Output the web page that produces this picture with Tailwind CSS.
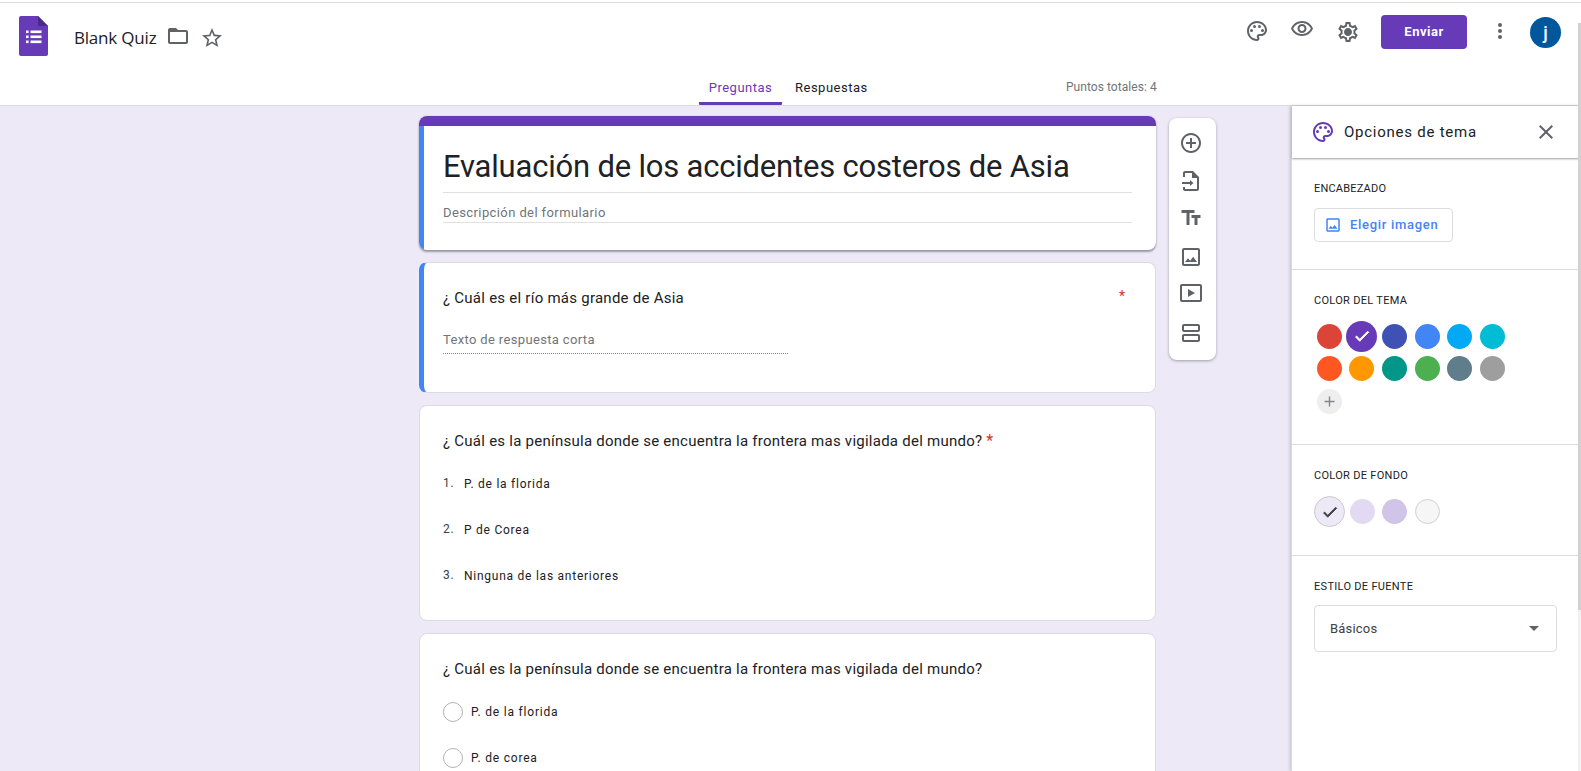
<!DOCTYPE html>
<html lang="en">
<head>
  <meta charset="UTF-8">
  <title>Blank Quiz</title>
  <script src="https://cdn.jsdelivr.net/npm/@tailwindcss/browser@4"></script>
</head>
<body class="relative h-[771px] overflow-hidden bg-white font-['Roboto',sans-serif] text-[#202124]">

  <!-- Top bar -->
  <header class="h-[104px] border-t border-b border-[#dadce0] mt-[2px] box-border bg-white flex flex-col">
    <div class="h-[63px] flex items-start relative">
      <svg class="ml-[19px] mt-[13px]" width="29" height="40" viewBox="0 0 29 40">
        <path d="M2 0h17l10 10v28a2 2 0 0 1-2 2H2a2 2 0 0 1-2-2V2a2 2 0 0 1 2-2z" fill="#673ab7"/>
        <path d="M19 0l10 10h-10z" fill="#4a2a8f"/>
        <g fill="#fff"><rect x="7" y="14.5" width="2.6" height="2.6"/><rect x="7" y="19.5" width="2.6" height="2.6"/><rect x="7" y="24.5" width="2.6" height="2.6"/><rect x="11.5" y="14.5" width="11" height="2.6"/><rect x="11.5" y="19.5" width="11" height="2.6"/><rect x="11.5" y="24.5" width="11" height="2.6"/></g>
      </svg>
      <span class="ml-[26px] mt-[23px] text-[17px] leading-[24px] font-['Open_Sans',sans-serif] tracking-[-0.2px]">Blank Quiz</span>
      <svg class="ml-[10px] mt-[21px]" width="24" height="24" viewBox="0 0 24 24" fill="#5f6368"><path d="M20 6h-8l-2-2H4c-1.1 0-1.99.9-1.99 2L2 18c0 1.1.9 2 2 2h16c1.1 0 2-.9 2-2V8c0-1.1-.9-2-2-2zm0 12H4V8h16v10z"/></svg>
      <svg class="ml-[10px] mt-[23px]" width="24" height="24" viewBox="0 0 24 24" fill="#5f6368"><path d="M22 9.24l-7.19-.62L12 2 9.19 8.63 2 9.24l5.46 4.73L5.82 21 12 17.27 18.18 21l-1.63-7.03L22 9.24zM12 15.4l-3.76 2.27 1-4.28-3.32-2.88 4.38-.38L12 6.1l1.71 4.04 4.38.38-3.32 2.88 1 4.28L12 15.4z"/></svg>
      <div class="ml-auto flex items-start">
        <svg class="mt-[16px]" width="24" height="24" viewBox="0 0 24 24" fill="#5f6368"><path d="M12 2C6.49 2 2 6.49 2 12s4.49 10 10 10c1.38 0 2.5-1.12 2.5-2.5 0-.61-.23-1.2-.64-1.67-.08-.1-.13-.21-.13-.33 0-.28.22-.5.5-.5H16c3.31 0 6-2.69 6-6 0-4.96-4.49-9-10-9zm4 13h-1.77c-1.38 0-2.5 1.12-2.5 2.5 0 .61.22 1.19.63 1.65.06.07.14.19.14.35 0 .28-.22.5-.5.5-4.41 0-8-3.59-8-8s3.59-8 8-8 8 3.14 8 7c0 2.21-1.79 4-4 4z"/><circle cx="6.5" cy="11.5" r="1.5"/><circle cx="9.5" cy="7.5" r="1.5"/><circle cx="14.5" cy="7.5" r="1.5"/><circle cx="17.5" cy="11.5" r="1.5"/></svg>
        <svg class="ml-[21px] mt-[14px]" width="24" height="24" viewBox="0 0 24 24" fill="#5f6368"><path d="M12 6c3.79 0 7.17 2.13 8.82 5.5C19.17 14.87 15.79 17 12 17s-7.17-2.13-8.82-5.5C4.83 8.13 8.21 6 12 6m0-2C7 4 2.73 7.11 1 11.5 2.73 15.89 7 19 12 19s9.27-3.11 11-7.5C21.27 7.11 17 4 12 4zm0 5c1.38 0 2.5 1.12 2.5 2.5S13.38 14 12 14s-2.5-1.12-2.5-2.5S10.62 9 12 9m0-2c-2.48 0-4.5 2.02-4.5 4.5S9.52 16 12 16s4.5-2.02 4.5-4.5S14.48 7 12 7z"/></svg>
        <svg class="ml-[22px] mt-[17px]" width="24" height="24" viewBox="0 0 24 24" fill="#5f6368"><path d="M19.43 12.98c.04-.32.07-.64.07-.98s-.03-.66-.07-.98l2.11-1.65c.19-.15.24-.42.12-.64l-2-3.46c-.12-.22-.39-.3-.61-.22l-2.49 1c-.52-.4-1.08-.73-1.69-.98l-.38-2.65C14.46 2.18 14.25 2 14 2h-4c-.25 0-.46.18-.49.42l-.38 2.65c-.61.25-1.17.59-1.69.98l-2.49-1c-.23-.09-.49 0-.61.22l-2 3.46c-.13.22-.07.49.12.64l2.11 1.65c-.04.32-.07.65-.07.98s.03.66.07.98l-2.11 1.65c-.19.15-.24.42-.12.64l2 3.46c.12.22.39.3.61.22l2.49-1c.52.4 1.08.73 1.69.98l.38 2.65c.03.24.24.42.49.42h4c.25 0 .46-.18.49-.42l.38-2.65c.61-.25 1.17-.59 1.69-.98l2.49 1c.23.09.49 0 .61-.22l2-3.46c.12-.22.07-.49-.12-.64l-2.11-1.65zM17.45 11.27c.04.31.05.52.05.73 0 .21-.02.43-.05.73l-.14 1.13.89.7 1.08.84-.7 1.21-1.27-.51-1.04-.42-.9.68c-.43.32-.84.56-1.25.73l-1.06.43-.16 1.13-.2 1.35h-1.4l-.19-1.35-.16-1.13-1.06-.43c-.43-.18-.83-.41-1.23-.71l-.91-.7-1.06.43-1.27.51-.7-1.21 1.08-.84.89-.7-.14-1.13c-.03-.31-.05-.54-.05-.74s.02-.43.05-.73l.14-1.13-.89-.7-1.08-.84.7-1.21 1.27.51 1.04.42.9-.68c.43-.32.84-.56 1.25-.73l1.06-.43.16-1.13.2-1.35h1.39l.19 1.35.16 1.13 1.06.43c.43.18.83.41 1.23.71l.91.7 1.06-.43 1.27-.51.7 1.21-1.07.85-.89.7.14 1.13zM12 8c-2.21 0-4 1.79-4 4s1.79 4 4 4 4-1.79 4-4-1.79-4-4-4z"/></svg>
        <button class="ml-[21px] mt-[12px] w-[86px] h-[34px] rounded-[4px] bg-[#673ab7] text-white text-[13px] font-bold tracking-[0.5px]">Enviar</button>
        <svg class="ml-[21px] mt-[16px]" width="24" height="24" viewBox="0 0 24 24" fill="#5f6368"><circle cx="12" cy="6" r="2"/><circle cx="12" cy="12" r="2"/><circle cx="12" cy="18" r="2"/></svg>
        <div class="ml-[18px] mr-[20px] mt-[14px] w-[31px] h-[31px] rounded-full bg-[#01579b] text-white text-[18px] font-medium flex items-center justify-center">j</div>
      </div>
    </div>
    <nav class="relative flex-1 flex pl-[699px]">
      <a class="w-[83px] text-center text-[13px] tracking-[0.5px] text-[#673ab7] pt-[12px] border-b-[3px] border-[#673ab7] rounded-b-[1px]">Preguntas</a>
      <a class="ml-[13px] w-[86px] pt-[12px] text-[13px] tracking-[0.5px] text-[#202124]">Respuestas</a>
      <span class="ml-[185px] pt-[12px] text-[12px] tracking-[0.05px] text-[#70757a]">Puntos totales: 4</span>
    </nav>
  </header>

  <div class="flex h-[665px]">
    <!-- Form column -->
    <main class="flex-1 bg-[#ede9f7] overflow-hidden pl-[419px] pt-[10px] flex items-start gap-[13px]">
      <div class="w-[737px] shrink-0 flex flex-col gap-[12px]">
        <section class="h-[134px] rounded-[8px] bg-white overflow-hidden shadow-[0_2px_2px_rgba(60,64,67,0.45),0_0_2px_rgba(60,64,67,0.2)]">
          <div class="h-[10px] bg-[#673ab7]"></div>
          <div class="h-[124px] border-l-[5px] border-[#4285f4] pl-[19px] pr-[24px]">
            <h1 class="pt-[20px] h-[67px] border-b border-[#e0e0e0] text-[31px] leading-[42px] font-normal tracking-[-0.2px]">Evaluación de los accidentes costeros de Asia</h1>
            <p class="pt-[11px] h-[30px] border-b border-[#e0e0e0] text-[13px] leading-[18px] tracking-[0.4px] text-[#70757a]">Descripción del formulario</p>
          </div>
        </section>

        <section class="h-[131px] rounded-[8px] bg-white border border-[#dadce0] border-l-[5px] border-l-[#4285f4] pl-[19px] pr-[23px] relative">
          <p class="pt-[25px] text-[15px] leading-[20px] tracking-[0.25px]">¿ Cuál es el río más grande de Asia</p>
          <div class="mt-[22px] w-[345px] h-[24px] border-b border-dotted border-[#80868b] text-[13px] tracking-[0.35px] text-[#70757a]">Texto de respuesta corta</div>
          <span class="absolute right-[30px] top-[23px] text-[14px] text-[#d93025]">*</span>
        </section>

        <section class="h-[216px] rounded-[8px] bg-white border border-[#dadce0] pl-[23px]">
          <p class="pt-[25px] text-[15px] leading-[20px] tracking-[0.25px]">¿ Cuál es la península donde se encuentra la frontera mas vigilada del mundo? <span class="text-[#d93025] text-[16px]">*</span></p>
          <ol class="mt-[23px] flex flex-col gap-[26px] text-[12px] leading-[20px] tracking-[0.75px]">
            <li class="flex"><span class="w-[21px] -mt-[1px] text-[#3c4043]">1.</span>P. de la florida</li>
            <li class="flex"><span class="w-[21px] -mt-[1px] text-[#3c4043]">2.</span>P de Corea</li>
            <li class="flex"><span class="w-[21px] -mt-[1px] text-[#3c4043]">3.</span>Ninguna de las anteriores</li>
          </ol>
        </section>

        <section class="h-[200px] rounded-[8px] bg-white border border-[#dadce0] pl-[23px]">
          <p class="pt-[25px] text-[15px] leading-[20px] tracking-[0.25px]">¿ Cuál es la península donde se encuentra la frontera mas vigilada del mundo?</p>
          <div class="mt-[23px] flex flex-col gap-[26px] text-[12px] leading-[20px] tracking-[0.8px]">
            <div class="flex items-center gap-[8px]"><span class="w-[20px] h-[20px] rounded-full border border-[#b0b3b8]"></span>P. de la florida</div>
            <div class="flex items-center gap-[8px]"><span class="w-[20px] h-[20px] rounded-full border border-[#b0b3b8]"></span>P. de corea</div>
          </div>
        </section>
      </div>

      <!-- Floating toolbar -->
      <div class="w-[47px] h-[242px] mt-[2px] pr-[3px] rounded-[8px] bg-white shadow-[0_1px_3px_rgba(60,64,67,0.45)] flex flex-col items-center pt-[13px]">
        <svg class="mb-[14px]" width="24" height="24" viewBox="0 0 24 24" fill="#5f6368"><path d="M13 7h-2v4H7v2h4v4h2v-4h4v-2h-4V7zm-1-5C6.48 2 2 6.48 2 12s4.48 10 10 10 10-4.48 10-10S17.52 2 12 2zm0 18c-4.41 0-8-3.59-8-8s3.59-8 8-8 8 3.59 8 8-3.59 8-8 8z"/></svg>
        <svg class="mb-[13px]" width="24" height="24" viewBox="0 0 24 24" fill="#5f6368"><path d="M14 2H6c-1.1 0-2 .9-2 2v4h2V4h7v5h5v11H6v-2H4v2c0 1.1.9 2 2 2h12c1.1 0 2-.9 2-2V8l-6-6z"/><path d="M11 11l3.5 3-3.5 3v-2H3v-2h8z"/></svg>
        <svg class="mb-[15px]" width="24" height="24" viewBox="0 0 24 24" fill="#5f6368"><path d="M2.5 4v3h5v12h3V7h5V4h-13zm19 5h-9v3h3v7h3v-7h3V9z"/></svg>
        <svg class="mb-[12px]" width="24" height="24" viewBox="0 0 24 24" fill="#5f6368"><path d="M19 5v14H5V5h14m0-2H5c-1.1 0-2 .9-2 2v14c0 1.1.9 2 2 2h14c1.1 0 2-.9 2-2V5c0-1.1-.9-2-2-2z"/><path d="M14.14 11.86l-3 3.87L9 13.14 6 17h12l-3.86-5.14z"/></svg>
        <svg class="mb-[16px]" width="24" height="24" viewBox="0 0 24 24" fill="#5f6368"><path d="M21 3H3c-1.1 0-2 .9-2 2v14c0 1.1.9 2 2 2h18c1.1 0 2-.9 2-2V5c0-1.1-.9-2-2-2zm0 16H3V5h18v14z"/><path d="M9 8v8l7-4z"/></svg>
        <svg width="24" height="24" viewBox="0 0 24 24" fill="#5f6368"><path d="M19 13H5c-1.1 0-2 .9-2 2v4c0 1.1.9 2 2 2h14c1.1 0 2-.9 2-2v-4c0-1.1-.9-2-2-2zm0 6H5v-4h14v4zM19 3H5c-1.1 0-2 .9-2 2v4c0 1.1.9 2 2 2h14c1.1 0 2-.9 2-2V5c0-1.1-.9-2-2-2zm0 6H5V5h14v4z"/></svg>
      </div>
    </main>

    <!-- Theme panel -->
    <aside class="w-[290px] shrink-0 bg-white border-l border-[#dadce0] shadow-[-1px_0_3px_rgba(60,64,67,0.25)]">
      <div class="h-[52px] flex items-center pl-[19px] pr-[23px] shadow-[0_1px_2px_rgba(60,64,67,0.5)]">
        <svg width="24" height="24" viewBox="0 0 24 24" fill="#673ab7"><path d="M12 2C6.49 2 2 6.49 2 12s4.49 10 10 10c1.38 0 2.5-1.12 2.5-2.5 0-.61-.23-1.2-.64-1.67-.08-.1-.13-.21-.13-.33 0-.28.22-.5.5-.5H16c3.31 0 6-2.69 6-6 0-4.96-4.49-9-10-9zm4 13h-1.77c-1.38 0-2.5 1.12-2.5 2.5 0 .61.22 1.19.63 1.65.06.07.14.19.14.35 0 .28-.22.5-.5.5-4.41 0-8-3.59-8-8s3.59-8 8-8 8 3.14 8 7c0 2.21-1.79 4-4 4z"/><circle cx="6.5" cy="11.5" r="1.5"/><circle cx="9.5" cy="7.5" r="1.5"/><circle cx="14.5" cy="7.5" r="1.5"/><circle cx="17.5" cy="11.5" r="1.5"/></svg>
        <span class="ml-[9px] text-[15px] font-normal tracking-[0.75px]">Opciones de tema</span>
        <svg class="ml-auto" width="24" height="24" viewBox="0 0 24 24" fill="#5f6368"><path d="M19 6.41L17.59 5 12 10.59 6.41 5 5 6.41 10.59 12 5 17.59 6.41 19 12 13.41 17.59 19 19 17.59 13.41 12z"/></svg>
      </div>
      <div class="h-[112px] border-b border-[#dadce0] pl-[22px] pt-[24px]">
        <h2 class="text-[11px] leading-[14px] font-normal tracking-[0.2px]">ENCABEZADO</h2>
        <button class="mt-[12px] w-[139px] h-[34px] border border-[#dadce0] rounded-[4px] flex items-center pl-[9px] text-[13px] font-medium tracking-[0.7px] text-[#4285f4]">
          <svg class="mr-[8px]" width="18" height="18" viewBox="0 0 24 24" fill="#4285f4"><path d="M19 5v14H5V5h14m0-2H5c-1.1 0-2 .9-2 2v14c0 1.1.9 2 2 2h14c1.1 0 2-.9 2-2V5c0-1.1-.9-2-2-2z"/><path d="M14.14 11.86l-3 3.87L9 13.14 6 17h12l-3.86-5.14z"/></svg>
          Elegir imagen
        </button>
      </div>
      <div class="h-[175px] border-b border-[#dadce0] pl-[22px] pt-[24px]">
        <h2 class="text-[11px] leading-[14px] font-normal tracking-[0.3px]">COLOR DEL TEMA</h2>
        <div class="mt-[12px] -ml-[1px] w-[196px] grid grid-cols-6 auto-rows-[32.6px] place-items-center">
          <span class="w-[25px] h-[25px] rounded-full bg-[#db4437]"></span>
          <span class="w-[31px] h-[31px] rounded-full bg-[#673ab7] flex items-center justify-center"><svg width="18" height="18" viewBox="0 0 24 24" fill="#fff" stroke="#fff" stroke-width="1.2"><path d="M9 16.2L4.8 12l-1.4 1.4L9 19 21 7l-1.4-1.4z"/></svg></span>
          <span class="w-[25px] h-[25px] rounded-full bg-[#3f51b5]"></span>
          <span class="w-[25px] h-[25px] rounded-full bg-[#4285f4]"></span>
          <span class="w-[25px] h-[25px] rounded-full bg-[#03a9f4]"></span>
          <span class="w-[25px] h-[25px] rounded-full bg-[#00bcd4]"></span>
          <span class="w-[25px] h-[25px] rounded-full bg-[#ff5722]"></span>
          <span class="w-[25px] h-[25px] rounded-full bg-[#ff9800]"></span>
          <span class="w-[25px] h-[25px] rounded-full bg-[#009688]"></span>
          <span class="w-[25px] h-[25px] rounded-full bg-[#4caf50]"></span>
          <span class="w-[25px] h-[25px] rounded-full bg-[#607d8b]"></span>
          <span class="w-[25px] h-[25px] rounded-full bg-[#9e9e9e]"></span>
          <span class="w-[25px] h-[25px] rounded-full bg-[#eeeeee] flex items-center justify-center"><svg width="17" height="17" viewBox="0 0 24 24" fill="#80868b"><path d="M19 13h-6v6h-2v-6H5v-2h6V5h2v6h6v2z"/></svg></span>
        </div>
      </div>
      <div class="h-[111px] border-b border-[#dadce0] pl-[22px] pt-[24px]">
        <h2 class="text-[11px] leading-[14px] font-normal tracking-[0.3px]">COLOR DE FONDO</h2>
        <div class="mt-[13px] flex items-center">
          <span class="w-[31px] h-[31px] rounded-full bg-[#ede9f7] border border-[#c9c9cf] flex items-center justify-center"><svg width="18" height="18" viewBox="0 0 24 24" fill="#3c4043" stroke="#3c4043" stroke-width="1"><path d="M9 16.2L4.8 12l-1.4 1.4L9 19 21 7l-1.4-1.4z"/></svg></span>
          <span class="ml-[5px] w-[25px] h-[25px] rounded-full bg-[#e1daf2]"></span>
          <span class="ml-[7px] w-[25px] h-[25px] rounded-full bg-[#d1c4e9]"></span>
          <span class="ml-[8px] w-[25px] h-[25px] rounded-full bg-[#f6f6f6] border border-[#d0d0d0]"></span>
        </div>
      </div>
      <div class="pl-[22px] pt-[24px]">
        <h2 class="text-[11px] leading-[14px] font-normal tracking-[0.3px]">ESTILO DE FUENTE</h2>
        <div class="mt-[11px] w-[243px] h-[47px] border border-[#dadce0] rounded-[4px] flex items-center pl-[15px] pr-[17px] text-[13px] text-[#3c4043] tracking-[0.2px]">
          Básicos
          <span class="ml-auto w-0 h-0 border-x-[5px] border-x-transparent border-t-[5px] border-t-[#5f6368]"></span>
        </div>
      </div>
    </aside>
  </div>

  <!-- Page scrollbar, overlays the panel's right edge -->
  <div class="absolute right-0 top-[23px] bottom-0 w-[3px] bg-[#f1f1f1]">
    <div class="h-[587px] bg-[#d2d2d2]"></div>
  </div>
</body>
</html>
